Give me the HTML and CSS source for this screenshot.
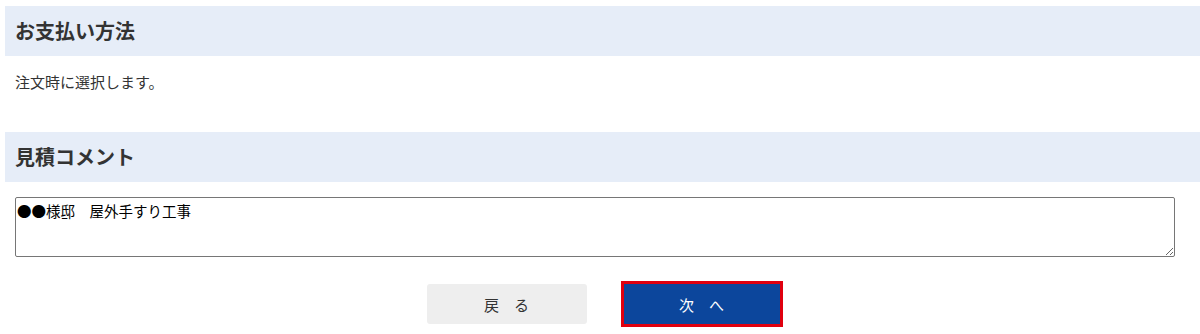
FILE: index.html
```html
<!DOCTYPE html>
<html lang="ja">
<head>
<meta charset="UTF-8" />
<meta name="viewport" content="width=device-width, initial-scale=1" />
<title>お見積り</title>
<link rel="stylesheet" href="styles.css">
</head>
<body>

<section class="block">
  <h2 class="block-title">お支払い方法</h2>
  <p class="block-text">注文時に選択します。</p>
</section>

<section class="block">
  <h2 class="block-title">見積コメント</h2>
  <div class="comment-wrap">
    <textarea class="comment" rows="3">●●様邸　屋外手すり工事</textarea>
  </div>
</section>

<div class="actions">
  <button class="btn btn-back">戻　る</button>
  <button class="btn btn-next">次　へ</button>
</div>

</body>
</html>
```

FILE: styles.css
```css
body {
  margin: 0;
  padding: 6px 0 0 5px;
  font-family: "Noto Sans CJK JP", "Noto Sans", sans-serif;
  color: #333;
  background: #fff;
}

.block-title {
  margin: 0;
  height: 50px;
  line-height: 50px;
  padding-left: 10px;
  background: #e6edf8;
  font-size: 20px;
  font-weight: bold;
  color: #333;
}

.block-text {
  margin: 0;
  height: 76px;
  padding: 16px 0 0 10px;
  box-sizing: border-box;
  font-size: 15px;
  line-height: 20px;
}

.comment-wrap {
  padding: 15px 25px 0 10px;
}

.comment {
  display: block;
  width: 100%;
  height: 60px;
  box-sizing: border-box;
  margin: 0;
  padding: 3px 1px;
  border: 1px solid #767676;
  border-radius: 2px;
  font-family: "Noto Sans CJK JP", sans-serif;
  font-size: 14.5px;
  line-height: 20px;
  color: #000;
  resize: vertical;
}

.actions {
  display: flex;
  justify-content: center;
  align-items: center;
  gap: 34px;
  padding: 24px 0 0 4px;
}

.btn {
  width: 160px;
  height: 40px;
  border: none;
  border-radius: 3px;
  font-family: "Noto Sans CJK JP", sans-serif;
  font-size: 15px;
  cursor: pointer;
}

.btn-back {
  background: #eeeeee;
  color: #333;
}

.btn-next {
  width: 162px;
  height: 46px;
  background: #0c469c;
  color: #fff;
  border: 3px solid #e0000f;
  border-radius: 0;
}
```
